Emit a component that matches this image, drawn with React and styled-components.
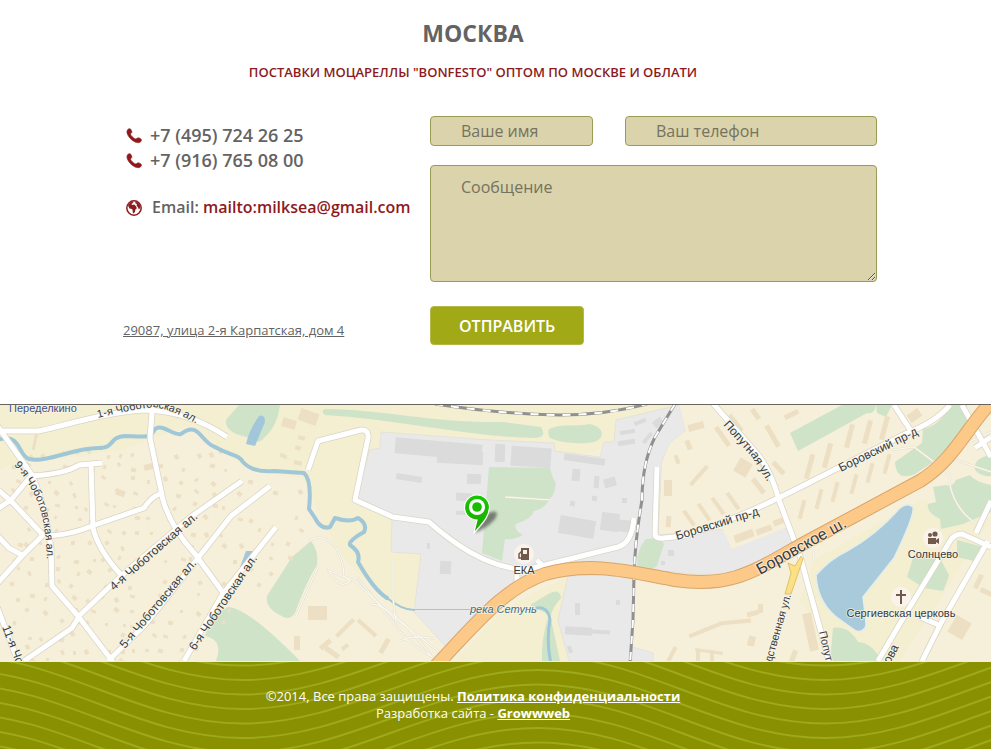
import React from 'react';
import styled, { createGlobalStyle } from 'styled-components';

const GlobalStyle = createGlobalStyle`
  *, *::before, *::after { box-sizing: border-box; }
  body {
    margin: 0;
    background: #fff;
    color: #636363;
    font-family: "Open Sans", "Noto Sans", sans-serif;
  }
`;

const Page = styled.div`
  display: flex;
  flex-direction: column;
  min-height: 100vh;
`;

const Heading = styled.header`
  padding: 15px 45px 0 0;
  text-align: center;
`;

const City = styled.h1`
  margin: 0;
  font-size: 23px;
  line-height: 36px;
  font-weight: 700;
`;

const Tagline = styled.h2`
  margin: 11px 0 0;
  font-size: 13px;
  line-height: 20px;
  font-weight: 600;
  color: #8d1a1d;
`;

const Contacts = styled.main`
  display: grid;
  grid-template-columns: 307px minmax(0, 447px);
  justify-content: center;
  padding: 34px 0 59px 9px;
`;

const Details = styled.address`
  display: flex;
  flex-direction: column;
  align-items: flex-start;
  padding-top: 7px;
  font-style: normal;
`;

const PhoneRow = styled.div`
  display: flex;
  align-items: center;
  gap: 8px;
  padding-left: 3px;
  font-size: 18px;
  line-height: 25px;
  font-weight: 600;
`;

const EmailRow = styled(PhoneRow)`
  gap: 10px;
  margin-top: 22px;
  font-size: 16px;
  white-space: nowrap;
`;

const MailLink = styled.a`
  color: #8d1a1d;
  text-decoration: none;
`;

const MapLink = styled.a`
  margin-top: 100px;
  font-size: 13px;
  line-height: 20px;
  color: #636363;
  text-decoration: underline;
`;

const Form = styled.form`
  display: flex;
  flex-direction: column;
  align-items: flex-start;
`;

const FieldRow = styled.div`
  display: grid;
  grid-template-columns: 163fr 252fr;
  gap: 32px;
  width: 100%;
`;

const Input = styled.input`
  width: 100%;
  min-width: 0;
  height: 30px;
  padding: 0 30px;
  border: 1px solid #9a9c56;
  border-radius: 4px;
  background: #dad3ab;
  color: #636363;
  font: 16px/22px "Open Sans", "Noto Sans", sans-serif;
  &::placeholder { color: #757260; opacity: 1; }
`;

const Message = styled(Input).attrs({ as: 'textarea' })`
  display: block;
  height: 117px;
  margin: 19px 0 24px;
  padding: 10px 30px;
  resize: both;
`;

const Submit = styled.button`
  height: 39px;
  padding: 0 28px;
  border: 1px solid #b4b94a;
  border-radius: 4px;
  background: #a1a916;
  color: #fff;
  font: 600 16px/20px "Open Sans", "Noto Sans", sans-serif;
  text-transform: uppercase;
  cursor: pointer;
`;

const MapFrame = styled.section`
  border-top: 1px solid #66645c;
  border-bottom: 1px solid #f5f2c4;
  background: #f6efd9;
`;

const MapSvg = styled.svg`
  display: block;
  width: 100%;
  height: 256px;
`;

const Footer = styled.footer`
  position: relative;
  flex: 1;
  min-height: 87px;
  padding: 26px 45px 26px 0;
  overflow: hidden;
  background: #899100;
  color: #fff;
  text-align: center;
  font-size: 13px;
  line-height: 17px;
`;

const WaveSvg = styled.svg`
  position: absolute;
  inset: 0;
  width: 100%;
  height: 100%;
`;

const FooterText = styled.p`
  position: relative;
  margin: 0;
`;

const FooterLink = styled.a`
  color: #fff;
  font-weight: 700;
`;

const PhoneIcon = () => (
  <svg width="16" height="16" viewBox="0 0 16 16" aria-hidden="true">
    <path fill="#8d1a1d" stroke="#8d1a1d" strokeWidth="0.6" d="M1.8 1.400C2.600.6 3.800.4 4.500 1c.8.8 1.300 2.200 1.400 3.100.1.900-1.300 1.200-1.300 2.100 0 1.300 3.600 4.700 5.300 4.800.9 0 1.200-1.300 2.100-1.300.9 0 2.700.9 3.300 1.700.6.8-.3 2.300-1.300 2.900-1.400.8-4.700.4-8.200-2.400C2.800 9.400 1 6.300.9 4c0-.9.300-1.800.9-2.600Z" />
  </svg>
);

const GlobeIcon = () => (
  <svg width="16" height="16" viewBox="0 0 16 16" aria-hidden="true">
    <circle cx="8" cy="8" r="7.2" fill="#fff" stroke="#8d1a1d" strokeWidth="1.500" />
    <path fill="#8d1a1d" d="M2 5.500 4.300 2.600 7.500 1.400 7 3.100 5.400 4 6.200 4.900 8.200 4.500 10 6.200 10.900 8.200 9.400 9.500 9 11.800 7.700 13.400 6.800 12.700 6.600 9.800 5 8.800 3.500 8.600 2.700 7ZM9.400 1.700 12.300 2.700 14.400 5.900 14.200 8 12.900 9.400 12 7.200 10.500 5.600 11 4.200 9.300 3.300Z" />
  </svg>
);

/* Small houses of the dacha district, laid out on a jittered grid. */
const houses = [];
for (let row = 0; row < 17; row += 1) {
  for (let col = 0; col < 20; col += 1) {
    const n = (row * 37 + col * 61 + row * col * 13) % 97;
    const x = 8 + col * 15 + (n % 11);
    const y = 450 + row * 13 + (n % 7);
    const limit = y < 480 ? 225 : 305 - Math.max(0, y - 540);
    if (n % 4 !== 0 && x < limit) houses.push({ x, y, w: 3 + (n % 3), h: 3 + (n % 2), a: (n % 9) * 8 });
  }
}

/* Larger buildings: x, y, width, height, rotation. */
const blocks = [
  [282, 419, 14, 9, 15], [299, 411, 19, 12, 20], [298, 436, 7, 4, 15], [295, 446, 6, 4, 15],
  [280, 454, 7, 4, 25], [294, 461, 8, 4, 10], [144, 464, 9, 6, -15], [116, 490, 9, 6, 20], [34, 428, 3, 22, 12],
  [308, 606, 19, 14, 0], [333, 626, 24, 4, -45], [355, 626, 24, 4, 42], [319, 642, 13, 5, -40],
  [341, 645, 8, 4, -40], [294, 636, 6, 14, 0], [382, 638, 5, 16, 30], [324, 650, 16, 5, 35],
  [688, 423, 16, 7, -15], [686, 440, 5, 10, -20], [675, 455, 4, 9, -20], [697, 463, 4, 25, 42],
  [720, 425, 5, 23, -35], [733, 413, 5, 20, -38], [664, 480, 8, 16, 0], [666, 516, 5, 11, 5],
  [687, 509, 4, 18, -35], [702, 502, 4, 20, -35], [716, 496, 4, 20, -35], [731, 491, 4, 20, -35],
  [736, 460, 14, 15, 30], [753, 408, 5, 12, -35], [770, 424, 5, 24, -30], [784, 412, 15, 5, -25],
  [759, 455, 5, 18, -38], [776, 460, 5, 16, -42], [756, 477, 5, 18, -38], [734, 532, 20, 8, -20],
  [756, 527, 16, 6, -20], [773, 518, 16, 6, -20],
  [807, 454, 5, 25, 15], [825, 443, 5, 25, 15], [847, 424, 5, 24, 15], [865, 420, 5, 24, 15],
  [882, 416, 5, 24, 15], [800, 500, 4, 19, 15], [817, 489, 4, 20, 15], [833, 482, 4, 20, 15],
  [852, 474, 4, 20, 15], [868, 463, 4, 20, 15], [885, 454, 4, 20, 15], [908, 411, 13, 9, -35],
  [688, 628, 34, 4, -22], [719, 620, 32, 4, -5], [670, 646, 4, 16, 28], [696, 650, 4, 12, 0],
  [710, 650, 4, 12, 0], [695, 650, 28, 3, 8], [747, 611, 12, 5, -15], [758, 604, 5, 9, 0],
  [806, 613, 9, 38, -12], [791, 650, 5, 12, 20], [748, 636, 7, 10, 15],
  [951, 618, 17, 19, 30], [976, 574, 5, 15, 25], [980, 590, 14, 5, 25],
];

const factories = [
  [395, 441, 87, 16, 5], [437, 451, 46, 13, 3], [396, 475, 26, 6, 9], [467, 474, 14, 10, 3],
  [456, 493, 16, 8, 3], [456, 511, 14, 4, 3], [440, 561, 11, 13, 3], [427, 543, 3, 6, 0],
  [495, 444, 10, 18, 2], [511, 447, 40, 20, 4], [564, 456, 41, 7, 8], [572, 469, 8, 12, 5],
  [594, 476, 5, 12, 5], [604, 478, 12, 9, -15], [559, 518, 36, 18, 10], [601, 513, 18, 18, 8],
  [618, 520, 14, 12, 5], [592, 496, 5, 5, 10], [570, 501, 5, 5, 10], [622, 498, 5, 5, 0],
  [575, 603, 5, 12, 0], [565, 627, 27, 8, 3], [592, 630, 18, 4, 3], [568, 646, 4, 7, -20],
  [616, 600, 4, 5, 0], [620, 430, 15, 4, -10], [634, 420, 12, 4, -20], [618, 440, 17, 5, -8],
  [641, 436, 13, 4, -50], [653, 419, 10, 7, -40], [668, 550, 6, 6, 0], [661, 561, 4, 4, 0],
];

const greens = [
  'M239 405H280C278 424 268 436 259 442C247 435 225 436 226 420Z',
  'M325 409C390 410 430 423 503 422L541 427Q548 438 534 438C470 437 396 419 325 415Q320 411 325 409Z',
  'M549 429C562 423 578 427 590 424C604 427 606 438 594 442C578 445 558 442 550 438Q547 433 549 429Z',
  'M489 467L550 468Q553 480 556 483Q554 497 550 498Q545 509 534 511Q532 519 516 524Q514 531 523 535Q515 540 505 539Q504 546 502 561L482 553Z',
  'M646 539Q660 537 664 544L657 566Q648 574 637 567Q637 548 646 539Z',
  'M311 541Q319 551 317 565Q307 580 295 613Q289 622 280 615Q265 608 267 596L292 557Z',
  'M213 614L228 607Q248 608 300 661H216Q224 640 205 636Z',
  'M545 596Q560 586 561 598Q547 614 552 624L560 661H542Q541 638 549 615L530 605Z',
  'M790 433L842 405H876Q874 415 867 413L798 451Z',
  'M876 405H892L886 417L877 413Z',
  'M948 405H967V422L939 458L915 474Q896 482 895 462L922 443L923 429Q942 425 948 405Z',
  'M933 487L946 485Q952 488 956 480L970 475Q975 482 991 485V512L963 524L941 529L940 519Q926 512 928 504L936 502Z',
  'M991 455Q973 458 975 470Q981 477 991 476Z',
  'M914 555L938 555L949 575Q947 583 943 591L924 588L907 577Z',
  'M957 540L983 547L978 562L957 557Z',
  'M833 628Q848 625 858 642Q873 643 881 661H830Z',
];

const whiteRoads = [
  'M-4 431H38C65 426 100 413 145 410Q188 411 227 437',
  'M153 400L150 438L163 500Q171 528 195 554L224 594',
  'M-4 424L32 475Q45 505 51 548L52 586L78 616L116 666',
  'M-4 510L11 500L31 476Q65 474 79 465L102 463',
  'M-4 488L12 502L43 535L22 556L-4 585',
  'M91 464L93 528Q98 550 122 576',
  'M48 536Q70 535 92 526L144 508Q151 497 160 494',
  'M-4 534L9 548L22 555',
  'M24 661L72 628L80 615L121 576L192 516L242 481',
  'M108 661L145 625L198 558L231 516L270 486',
  'M184 661L222 595L276 527',
  'M-4 604L18 661',
  'M308 470L318 441L361 430Q369 429 368 438L355 500L393 517L429 522Q440 532 457 544Q490 567 525 570L618 547Q632 543 634 518',
  'M657 467L655 534Q655 539 664 538L684 536C750 515 790 492 842 466L905 434Q936 422 950 405',
  'M710 400L752 448Q770 466 779 500L800 556L829 661',
  'M894 405L911 431',
  'M962 405L991 457',
  'M975 448L991 437',
  'M991 501L976 533',
  'M991 547L962 534Q954 534 950 541L908 610L878 661',
  'M988 541L941 623L925 655L920 666',
  'M920 617L941 626',
  'M517 572V588M537 560L550 573',
];

const paths = [
  'M308 542Q323 531 336 548Q344 563 344 576L350 581Q340 591 329 571L355 581L391 615L451 661',
  'M318 567L296 616M393 559V598L396 623M368 604Q391 602 432 657L407 640L357 577',
  'M400 641Q415 634 435 639M505 497L551 500',
  'M953 449L991 432M892 450L914 447L950 474V485Q955 510 978 525M950 458L991 472',
  'M814 550L813 562',
];

const Label = styled.text`
  font-family: "Liberation Sans", Arial, sans-serif;
  font-size: ${(p) => p.$size || 12}px;
  font-style: ${(p) => (p.$river ? 'italic' : 'normal')};
  fill: ${(p) => p.$color || '#363a42'};
  stroke: #f9f5e6;
  stroke-width: 2px;
  stroke-opacity: 0.7;
  stroke-linejoin: round;
  paint-order: stroke;
`;

const rectOf = ([x, y, w, h, a], i) => (
  <rect key={i} x={x} y={y} width={w} height={h} transform={`rotate(${a} ${x + w / 2} ${y + h / 2})`} />
);

const CityMap = () => (
  <MapSvg viewBox="0 405 991 256" preserveAspectRatio="xMidYMid slice" role="img" aria-label="Карта проезда">
    <defs>
      <path id="street-1" d="M98 418Q128 410 154 407Q178 411 210 432" />
      <path id="street-9" d="M14 465Q34 487 41 512Q48 540 47 580" />
      <path id="street-p" d="M723 425L752 457L777 497" />
      <linearGradient id="pin" x1="0" y1="0" x2="0" y2="1">
        <stop offset="0" stopColor="#18c800" />
        <stop offset="1" stopColor="#1da500" />
      </linearGradient>
      <filter id="soft" x="-50%" y="-50%" width="200%" height="200%"><feGaussianBlur stdDeviation="1.500" /></filter>
    </defs>

    <path fill="#f6efd9" d="M0 405H991V661H0Z" />
    <path fill="#f3efd0" d="M0 405H500L690 405L640 440L380 500L430 550L412 610L385 600L345 560L322 520L303 478L250 470L190 425L120 450L70 457L25 458L0 470Z" />
    <path fill="#f3efd0" d="M455 661L505 608L568 577L560 615L568 661Z" />
    <path fill="#f3efd0" d="M800 600L814 560L920 500L990 520L900 661H845Z" />
    <g fill="#e9e9ea" stroke="#dddcd5" strokeWidth="0.6">
      <path d="M381 432L490 440L554 443L555 451L600 457L604 442H614L616 420L679 405L686 431L670 443L662 461L658 535L726 529L785 528L797 543C760 570 720 579 675 572L589 567L528 577L491 610L447 648L414 612L421 554L391 552L392 520L355 500L370 450L380 448Z" />
      <path d="M568 576L633 574L632 661H569L558 620Z" />
      <path d="M632 647L653 653V661H632Z" />
    </g>
    <path fill="#f6efd9" d="M686 431L670 443L662 463L659 534L722 528L732 549L785 528L780 500L712 405H679Z" />
    <g fill="#cfe3c9">{greens.map((d) => <path key={d} d={d} />)}</g>
    <g fill="#ecdfc4">
      {houses.map((b, i) => rectOf([b.x, b.y, b.w, b.h, b.a], i))}
      {blocks.map(rectOf)}
    </g>
    <g fill="#dbdbdb">{factories.map(rectOf)}</g>

    <path
      fill="#a8cadb"
      stroke="#e6eee9"
      strokeWidth="1.500"
      d="M816 575Q830 559 847 551Q875 536 900 508Q907 502 913 507Q915 515 894 558L863 597Q866 620 866 626Q861 635 853 629L835 616Q817 600 816 575Z"
    />
    <path fill="#a2c7da" d="M246 444Q249 430 259 416Q265 414 265 422L255 446ZM246 551L254 551L253 563L240 567Z" />
    <g fill="none" stroke="#9fc7d8" strokeLinecap="round" strokeLinejoin="round">
      <path strokeWidth="4" d="M-3 440C22 432 17 455 29 459C48 463 73 448 98 448C116 448 108 437 125 436C150 437 150 438 155 429C162 423 173 436 181 434C199 420 200 442 215 447C231 456 238 454 243 462Q253 473 274 471L304 473Q312 480 309 509L315 518Q321 530 330 527L335 518Q350 523 358 518Q368 524 364 532Q348 541 350 545Q361 552 358 562Q374 590 387 598" />
      <path strokeWidth="2" d="M387 598Q402 610 414 610" />
      <path strokeWidth="1" d="M412 609.500H490" />
      <path strokeWidth="3" d="M537 608Q548 606 550 620Q546 641 551 664" />
    </g>

    <g fill="none" stroke="#e2dfcf" strokeWidth="2.200">{paths.map((d) => <path key={d} d={d} />)}</g>
    <g fill="none" stroke="#faf8ef" strokeWidth="1.200">{paths.map((d) => <path key={d} d={d} />)}</g>
    <g fill="none" stroke="#d9d5c8" strokeWidth="6.500" strokeLinejoin="round">
      {whiteRoads.map((d) => <path key={d} d={d} />)}
    </g>
    <g fill="none" stroke="#fff" strokeWidth="5" strokeLinejoin="round">
      {whiteRoads.map((d) => <path key={d} d={d} />)}
    </g>

    <g fill="none">
      <path stroke="#909090" strokeWidth="3" d="M435 404Q500 414 560 415Q605 415 647 404M675 404L655 437Q642 463 642 500Q635 540 634 575L633 620L630 664" />
      <path stroke="#fff" strokeWidth="2" strokeDasharray="8 8" d="M435 404Q500 414 560 415Q605 415 647 404M675 404L655 437Q642 463 642 500Q635 540 634 575L633 620L630 664" />
      <path stroke="#d8a56a" strokeWidth="14" d="M430 672C475 625 502 589 545 574C592 561 630 572 675 580C735 589 758 568 810 540L920 481C957 458 968 423 999 394" />
      <path stroke="#fdc988" strokeWidth="12" d="M430 672C475 625 502 589 545 574C592 561 630 572 675 580C735 589 758 568 810 540L920 481C957 458 968 423 999 394" />
      <path fill="#fbe184" stroke="#d4b760" strokeWidth="0.800" d="M788 563L795 566L801 556L803 559L791 594H785L791 573Z" />
    </g>

    <Label $size={11} $color="#3d4f87" x="9" y="412">Переделкино</Label>
    <Label $size={11}><textPath href="#street-1">1-я Чоботовская ал.</textPath></Label>
    <Label $size={11}><textPath href="#street-9">9-я Чоботовская ал.</textPath></Label>
    <Label $size={12} transform="translate(114 591) rotate(-41)">4-я Чоботовская ал.</Label>
    <Label $size={12} transform="translate(125 649) rotate(-50)">5-я Чоботовская ал.</Label>
    <Label $size={12} transform="translate(195 651) rotate(-56)">6-я Чоботовская ал.</Label>
    <Label $size={12} transform="translate(2 627) rotate(69)">11-я Чо</Label>
    <Label $size={12}><textPath href="#street-p">Попутная ул.</textPath></Label>
    <Label $size={12} transform="translate(677 540) rotate(-17)">Боровский пр-д</Label>
    <Label $size={12} transform="translate(841 472) rotate(-26)">Боровский пр-д</Label>
    <Label $size={16} transform="translate(760 575) rotate(-29)">Боровское ш.</Label>
    <Label $size={11} textAnchor="end" transform="translate(791 595) rotate(-74)">дственная ул.</Label>
    <Label $size={11} transform="translate(819 632) rotate(77)">Попут</Label>
    <Label $size={12} textAnchor="end" transform="translate(899 647) rotate(-62)">ова</Label>
    <Label $size={11} $river $color="#426d88" x="470" y="613">река Сетунь</Label>

    <g fill="#faf3ec">
      <circle cx="524" cy="554" r="10" />
      <circle cx="933" cy="538" r="10" />
      <circle cx="901" cy="597" r="10" />
    </g>
    <g fill="#71594b">
      <path fillRule="evenodd" d="M521 548H529V560H521ZM523 550V554H527V550Z" />
      <path fill="none" stroke="#71594b" strokeWidth="1.500" d="M522 551L519 554V558H522" />
      <circle cx="930" cy="535" r="2" />
      <circle cx="935" cy="534" r="2.600" />
      <path d="M928 538H936V540L939 538V544L936 542V544H928Z" />
      <path d="M900 590H902V594H906V596H902V604H900V596H896V594H900Z" />
    </g>
    <Label $size={11} x="524" y="574" textAnchor="middle">ЕКА</Label>
    <Label $size={11} x="933" y="558" textAnchor="middle">Солнцево</Label>
    <Label $size={11} x="901" y="617" textAnchor="middle">Сергиевская церковь</Label>

    <path d="M474 533L488 513Q501 508 495 519Q486 529 474 533Z" fill="#4f514d" opacity="0.7" filter="url(#soft)" />
    <path fill="url(#pin)" stroke="#fff" strokeWidth="1.200" d="M473.500 534L477 520A12.500 12.500 0 1 1 489.500 507C489 519 480 525 473.500 534Z" />
    <circle cx="477" cy="507" r="8" fill="#fff" />
    <circle cx="477" cy="507" r="4.800" fill="#18bd00" />
  </MapSvg>
);

/* Each contour has crests 583 units apart, with troughs halfway between. */
const contours = Array.from({ length: 13 }, (_, i) => {
  const crest = i * 14.5 - 79;
  const trough = crest + 68;
  return `M-340 ${trough}C-234 ${trough} -151 ${crest} -45 ${crest}S137 ${trough} 243 ${trough}S432 ${crest} 538 ${crest}S719 ${trough} 825 ${trough}S1010 ${crest} 1116 ${crest}`;
});

const Waves = () => (
  <WaveSvg viewBox="0 0 991 87" preserveAspectRatio="xMidYMin slice" aria-hidden="true">
    <g fill="none" stroke="#9ea91b" strokeWidth="2">
      {contours.map((d) => <path key={d} d={d} />)}
    </g>
  </WaveSvg>
);

const phones = ['+7 (495) 724 26 25', '+7 (916) 765 08 00'];

export default function App() {
  return (
    <Page>
      <GlobalStyle />
      <Heading>
        <City>МОСКВА</City>
        <Tagline>ПОСТАВКИ МОЦАРЕЛЛЫ "BONFESTO" ОПТОМ ПО МОСКВЕ И ОБЛАТИ</Tagline>
      </Heading>
      <Contacts>
        <Details>
          {phones.map((phone) => (
            <PhoneRow key={phone}><PhoneIcon />{phone}</PhoneRow>
          ))}
          <EmailRow>
            <GlobeIcon />
            <span>Email: <MailLink href="mailto:milksea@gmail.com">mailto:milksea@gmail.com</MailLink></span>
          </EmailRow>
          <MapLink href="#map">29087, улица 2-я Карпатская, дом 4</MapLink>
        </Details>
        <Form onSubmit={(e) => e.preventDefault()}>
          <FieldRow>
            <Input name="name" placeholder="Ваше имя" aria-label="Ваше имя" />
            <Input name="phone" type="tel" placeholder="Ваш телефон" aria-label="Ваш телефон" />
          </FieldRow>
          <Message name="message" placeholder="Сообщение" aria-label="Сообщение" />
          <Submit type="submit">Отправить</Submit>
        </Form>
      </Contacts>
      <MapFrame id="map"><CityMap /></MapFrame>
      <Footer>
        <Waves />
        <FooterText>
          ©2014, Все права защищены. <FooterLink href="#privacy">Политика конфиденциальности</FooterLink>
          <br />
          Разработка сайта - <FooterLink href="#growwweb">Growwweb</FooterLink>
        </FooterText>
      </Footer>
    </Page>
  );
}
